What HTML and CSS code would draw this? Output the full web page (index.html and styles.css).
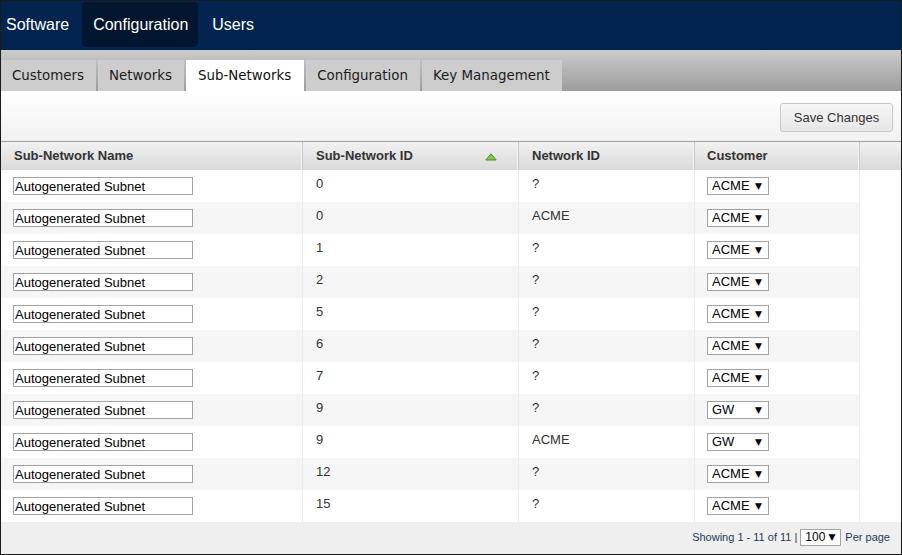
FILE: index.html
```html
<!DOCTYPE html>
<html>
<head>
<meta charset="utf-8">
<title>Sub-Networks</title>
<link rel="stylesheet" href="styles.css">
</head>
<body>
<div class="frame">
  <nav class="topnav">
    <a class="nav-item">Software</a>
    <a class="nav-item active">Configuration</a>
    <a class="nav-item">Users</a>
  </nav>
  <div class="tabbar">
    <a class="tab">Customers</a>
    <a class="tab">Networks</a>
    <a class="tab active">Sub-Networks</a>
    <a class="tab">Configuration</a>
    <a class="tab">Key Management</a>
  </div>
  <div class="toolbar">
    <button class="btn">Save Changes</button>
  </div>
  <div class="grid">
    <div class="row head">
      <div class="c c1">Sub-Network Name</div>
      <div class="c c2">Sub-Network ID
        <svg class="sort" width="12" height="8" viewBox="0 0 12 8"><path d="M6 0.8 L11.2 7 L0.8 7 Z" fill="#8cc254" stroke="#4f8a1f" stroke-width="1"/></svg>
      </div>
      <div class="c c3">Network ID</div>
      <div class="c c4">Customer</div>
      <div class="c c5"></div>
    </div>
    <div class="body" id="rows"></div>
  </div>
  <div class="footer">
    <span>Showing 1 - 11 of 11 |</span>
    <span class="sel small"><span>100</span><span class="arr">▼</span></span>
    <span>Per page</span>
  </div>
</div>
<script src="app.js"></script>
</body>
</html>
```
FILE: app.js
```js
var data = [
  ["0", "?", "ACME"],
  ["0", "ACME", "ACME"],
  ["1", "?", "ACME"],
  ["2", "?", "ACME"],
  ["5", "?", "ACME"],
  ["6", "?", "ACME"],
  ["7", "?", "ACME"],
  ["9", "?", "GW"],
  ["9", "ACME", "GW"],
  ["12", "?", "ACME"],
  ["15", "?", "ACME"]
];
var host = document.getElementById("rows");
var html = "";
data.forEach(function (d) {
  html += '<div class="row">' +
    '<div class="c c1"><input class="inp" type="text" value="Autogenerated Subnet"></div>' +
    '<div class="c c2"><span class="txt">' + d[0] + '</span></div>' +
    '<div class="c c3"><span class="txt">' + d[1] + '</span></div>' +
    '<div class="c c4"><span class="sel"><span>' + d[2] + '</span><span class="arr">▼</span></span></div>' +
    '<div class="c c5"></div>' +
    '</div>';
});
host.innerHTML = html;
```
FILE: styles.css
```css
* { box-sizing: border-box; }
html, body { margin: 0; padding: 0; background: #fff; }
body { font-family: "Liberation Sans", Arial, sans-serif; }

.frame {
  width: 902px;
  height: 555px;
  border: 1px solid #1a1a1a;
  display: flex;
  flex-direction: column;
  overflow: hidden;
}

.topnav {
  height: 49px;
  background: #03244e;
  display: flex;
  gap: 3px;
  align-items: flex-start;
}
.nav-item {
  color: #fff;
  font-size: 16px;
  height: 45px;
  line-height: 45px;
  margin-top: 1px;
  padding: 0 10px 0 11px;
  border-radius: 4px;
}
.nav-item:first-child { padding-left: 5px; }
.nav-item.active { background: #02162f; }

.tabbar {
  height: 41px;
  background: linear-gradient(#cbcbcb, #9d9d9d);
  display: flex;
  align-items: flex-end;
  gap: 2px;
}
.tab {
  font-family: "DejaVu Sans", Verdana, sans-serif;
  font-size: 13.4px;
  color: #1c1c1c;
  background: #cdcdcd;
  height: 31px;
  line-height: 31px;
  padding: 0 12px 0 11px;
}
.tab.active { background: #fff; color: #111; padding: 0 13px 0 12px; }

.toolbar {
  height: 50px;
  background: linear-gradient(#fff, #f1f1f1);
  display: flex;
  justify-content: flex-end;
  align-items: flex-start;
  padding: 12px 8px 0 0;
}
.btn {
  font-family: "Liberation Sans", Arial, sans-serif;
  font-size: 13px;
  color: #333;
  width: 113px;
  height: 29px;
  border: 1px solid #c9c9c9;
  border-radius: 3px;
  background: linear-gradient(#f7f7f7, #e6e6e6);
  padding: 0;
}

.grid { border-top: 1px solid #9c9c9c; }
.row { display: flex; height: 32px; }
.head { height: 28px; background: linear-gradient(#f1f1f1, #d9d9d9); }
.c {
  flex: none;
  font-size: 13px;
  color: #333;
  border-right: 1px solid #ececec;
}
.c1 { width: 302px; padding-left: 12px; }
.c2 { width: 216px; padding-left: 13px; }
.c3 { width: 176px; padding-left: 13px; }
.c4 { width: 165px; padding-left: 12px; }
.c5 { width: 41px; border-right: none; }

.head .c {
  font-weight: bold;
  line-height: 28px;
  border-right: 1px solid #c9c9c9;
  box-shadow: inset -1px 0 0 #f4f4f4;
}
.head .c1 { padding-left: 13px; }
.head .c2 { position: relative; }
.head .c5 { border-right: none; box-shadow: none; }
.sort { position: absolute; right: 21px; top: 11px; }

.body .row:nth-child(even) .c1,
.body .row:nth-child(even) .c2,
.body .row:nth-child(even) .c3,
.body .row:nth-child(even) .c4 { background: #f5f5f5; }
.body .c { padding-top: 7px; }
.body .c2, .body .c3 { padding-top: 6px; }
.body .c5 { background: #fff; }
.txt { display: block; line-height: 15px; }

.inp {
  display: block;
  width: 180px;
  height: 18px;
  border: 1px solid #a3a3a3;
  padding: 0 1px;
  margin: 0;
  font-family: "Liberation Sans", Arial, sans-serif;
  font-size: 13px;
  color: #000;
  background: #fff;
  outline: none;
}

.sel {
  display: inline-flex;
  justify-content: space-between;
  align-items: center;
  width: 62px;
  height: 18px;
  border: 1px solid #a3a3a3;
  background: #fff;
  padding: 0 6px 0 4px;
  font-size: 13px;
  color: #000;
  line-height: 16px;
}
.arr { font-size: 9px; font-family: "DejaVu Sans", sans-serif; }

.footer {
  flex: 1;
  background: #efefef;
  display: flex;
  justify-content: flex-end;
  align-items: center;
  gap: 4px;
  padding: 0 11px 2px 0;
  font-size: 11px;
  color: #253a58;
}
.footer .sel.small {
  width: 41px;
  height: 17px;
  font-size: 12px;
  padding: 0 5px 0 4px;
  margin-left: -1px;
}
```
